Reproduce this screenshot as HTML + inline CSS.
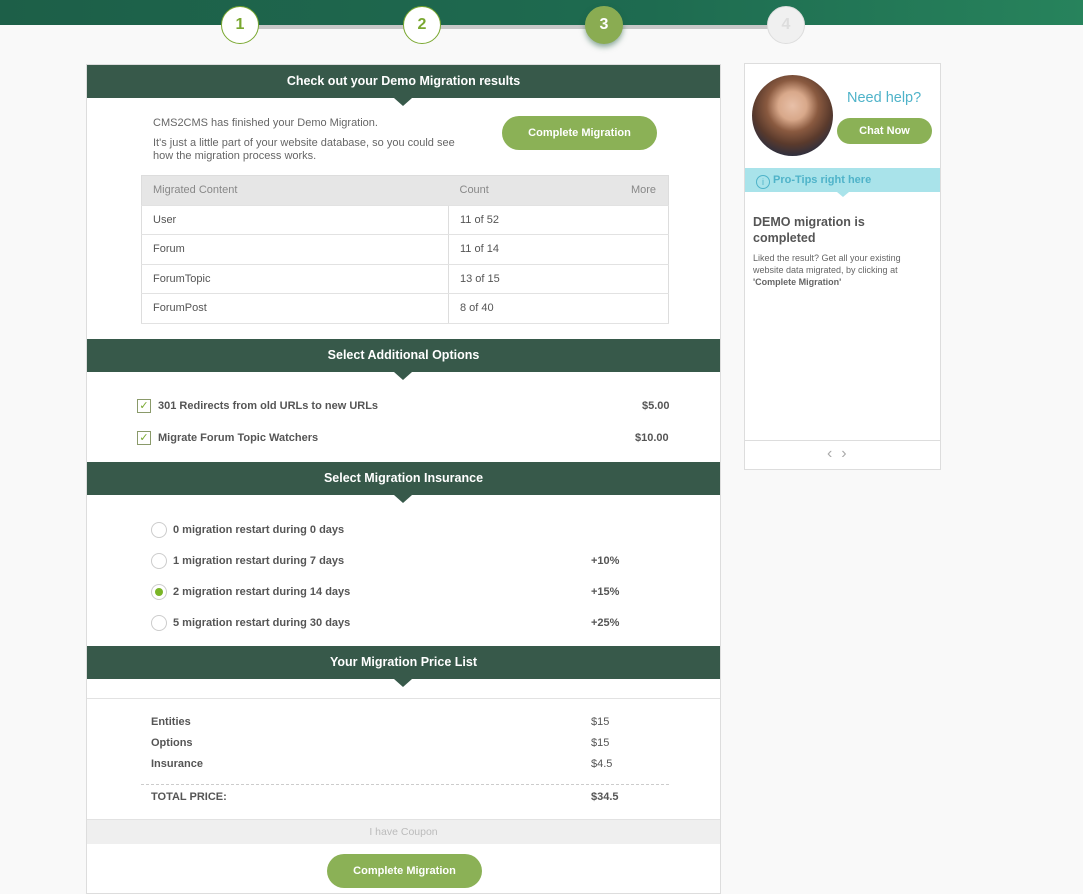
<!DOCTYPE html>
<html><head><style>
*{margin:0;padding:0;box-sizing:border-box}
body{width:1083px;height:885px;background:#f9f9f9;font-family:"Liberation Sans",sans-serif;color:#555;position:relative;overflow:hidden;font-size:11px}
.a{position:absolute}
.top{left:0;top:0;width:1083px;height:25px;background:linear-gradient(90deg,#1d5f48,#1e6b50 60%,#27835c)}
.line{top:25px;left:240px;width:546px;height:4px;background:#c8c8c8}
.st{width:38px;height:38px;border-radius:50%;top:6px;background:#fff;border:1px solid #7aa830;color:#7aa830;font-weight:bold;font-size:16px;text-align:center;line-height:36px}
.card{left:86px;top:64px;width:635px;height:830px;background:#fff;border:1px solid #ddd}
.hd{left:0;width:633px;height:33px;background:#37594a;color:#fff;font-weight:bold;font-size:12.5px;text-align:center;line-height:33px}
.hd:after{content:"";position:absolute;left:307px;bottom:-8px;border:9px solid transparent;border-top:8px solid #37594a;border-bottom:0}
.btn{background:#8bb156;color:#fff;font-weight:bold;border-radius:17px;text-align:center}
.b{font-weight:bold}
table{border-collapse:collapse}
.tbl{left:54px;top:110px;width:528px;border:1px solid #ddd}
.tbl td{height:29.5px;border-bottom:1px solid #e2e2e2;padding-left:11px;font-size:11px}
.tbl tr:first-child td{background:#e6e6e6;color:#888}
.cb{width:14px;height:14px;border:1px solid #8a9a6a;color:#7aa830;font-size:11px;line-height:12px;text-align:center}
.rd{width:16px;height:16px;border:1px solid #ccc;border-radius:50%}
</style></head><body>
<div class="a top"></div>
<div class="a line"></div>
<div class="a st" style="left:221px">1</div>
<div class="a st" style="left:403px">2</div>
<div class="a st" style="left:585px;background:#8aac52;border-color:#8aac52;color:#fff;box-shadow:0 3px 6px rgba(30,90,60,.5)">3</div>
<div class="a st" style="left:767px;background:#f0f0f0;border-color:#ddd;color:#ddd">4</div>

<div class="a card">
<div class="a hd" style="top:0">Check out your Demo Migration results</div>
<div class="a" style="left:66px;top:52px;color:#666">CMS2CMS has finished your Demo Migration.</div>
<div class="a" style="left:66px;top:72px;color:#666;line-height:13px;width:318px">It's just a little part of your website database, so you could see how the migration process works.</div>
<div class="a btn" style="left:415px;top:51px;width:155px;height:34px;line-height:34px">Complete Migration</div>
<table class="a tbl">
<tr><td style="width:307px">Migrated Content</td><td style="border-left:0">Count</td><td style="text-align:right;padding-right:12px">More</td></tr>
<tr><td>User</td><td style="border-left:1px solid #ddd">11 of 52</td><td></td></tr>
<tr><td>Forum</td><td style="border-left:1px solid #ddd">11 of 14</td><td></td></tr>
<tr><td>ForumTopic</td><td style="border-left:1px solid #ddd">13 of 15</td><td></td></tr>
<tr><td>ForumPost</td><td style="border-left:1px solid #ddd">8 of 40</td><td></td></tr>
</table>
<div class="a hd" style="top:274px">Select Additional Options</div>
<div class="a cb" style="left:50px;top:334px">✓</div>
<div class="a b" style="left:71px;top:335px">301 Redirects from old URLs to new URLs</div>
<div class="a b" style="left:555px;top:335px">$5.00</div>
<div class="a cb" style="left:50px;top:366px">✓</div>
<div class="a b" style="left:71px;top:367px">Migrate Forum Topic Watchers</div>
<div class="a b" style="left:548px;top:367px">$10.00</div>
<div class="a hd" style="top:397px">Select Migration Insurance</div>
<div class="a rd" style="left:64px;top:457px"></div><div class="a b" style="left:86px;top:459px">0 migration restart during 0 days</div>
<div class="a rd" style="left:64px;top:488px"></div><div class="a b" style="left:86px;top:490px">1 migration restart during 7 days</div><div class="a b" style="left:504px;top:490px">+10%</div>
<div class="a rd" style="left:64px;top:519px"><div class="a" style="left:3px;top:3px;width:8px;height:8px;border-radius:50%;background:#7ab526"></div></div><div class="a b" style="left:86px;top:521px">2 migration restart during 14 days</div><div class="a b" style="left:504px;top:521px">+15%</div>
<div class="a rd" style="left:64px;top:550px"></div><div class="a b" style="left:86px;top:552px">5 migration restart during 30 days</div><div class="a b" style="left:504px;top:552px">+25%</div>
<div class="a hd" style="top:581px">Your Migration Price List</div>
<div class="a" style="left:0;top:633px;width:633px;border-top:1px solid #e2e2e2"></div>
<div class="a b" style="left:64px;top:651px">Entities</div><div class="a" style="left:504px;top:651px">$15</div>
<div class="a b" style="left:64px;top:672px">Options</div><div class="a" style="left:504px;top:672px">$15</div>
<div class="a b" style="left:64px;top:693px">Insurance</div><div class="a" style="left:504px;top:693px">$4.5</div>
<div class="a" style="left:54px;top:719px;width:528px;border-top:1px dashed #ccc"></div>
<div class="a b" style="left:64px;top:726px">TOTAL PRICE:</div><div class="a b" style="left:504px;top:726px">$34.5</div>
<div class="a" style="left:0;top:754px;width:633px;height:25px;background:#efefef;border-top:1px solid #e2e2e2;color:#bbb;text-align:center;line-height:24px;font-size:10.5px">I have Coupon</div>
<div class="a btn" style="left:240px;top:789px;width:155px;height:34px;line-height:34px">Complete Migration</div>
</div>

<div class="a" style="left:744px;top:63px;width:197px;height:407px;background:#fff;border:1px solid #ddd">
<div class="a" style="left:7px;top:11px;width:81px;height:81px;border-radius:50%;background:radial-gradient(circle at 50% 38%,#e8c0a8 0,#d8a88a 22%,#8a5a40 40%,#5a3a2c 60%,#2a2e40 80%)"></div>
<div class="a" style="left:102px;top:26px;color:#4fb3c9;font-size:14.5px">Need help?</div>
<div class="a btn" style="left:92px;top:54px;width:95px;height:26px;line-height:26px;border-radius:13px">Chat Now</div>
<div class="a" style="left:0;top:104px;width:195px;height:24px;background:#a9e3ea;color:#4fb3c9;font-weight:bold;line-height:24px;padding-left:11px"><span style="display:inline-block;width:14px;height:14px;border:1px solid #4fb3c9;border-radius:50%;text-align:center;line-height:12px;font-size:9px;font-weight:normal;vertical-align:-2px;margin-right:3px">i</span>Pro-Tips right here</div>
<div class="a" style="left:92px;top:128px;border:6px solid transparent;border-top:5px solid #a9e3ea"></div>
<div class="a b" style="left:8px;top:150px;font-size:12.5px;line-height:16px;width:130px">DEMO migration is completed</div>
<div class="a" style="left:8px;top:188px;font-size:9px;line-height:12px;color:#666;width:180px">Liked the result? Get all your existing website data migrated, by clicking at <b>'Complete Migration'</b></div>
<div class="a" style="left:0;top:376px;width:195px;border-top:1px solid #ddd"></div>
<div class="a" style="left:82px;top:381px;color:#aaa;font-size:16px">‹ &nbsp;›</div>
</div>
</body></html>
